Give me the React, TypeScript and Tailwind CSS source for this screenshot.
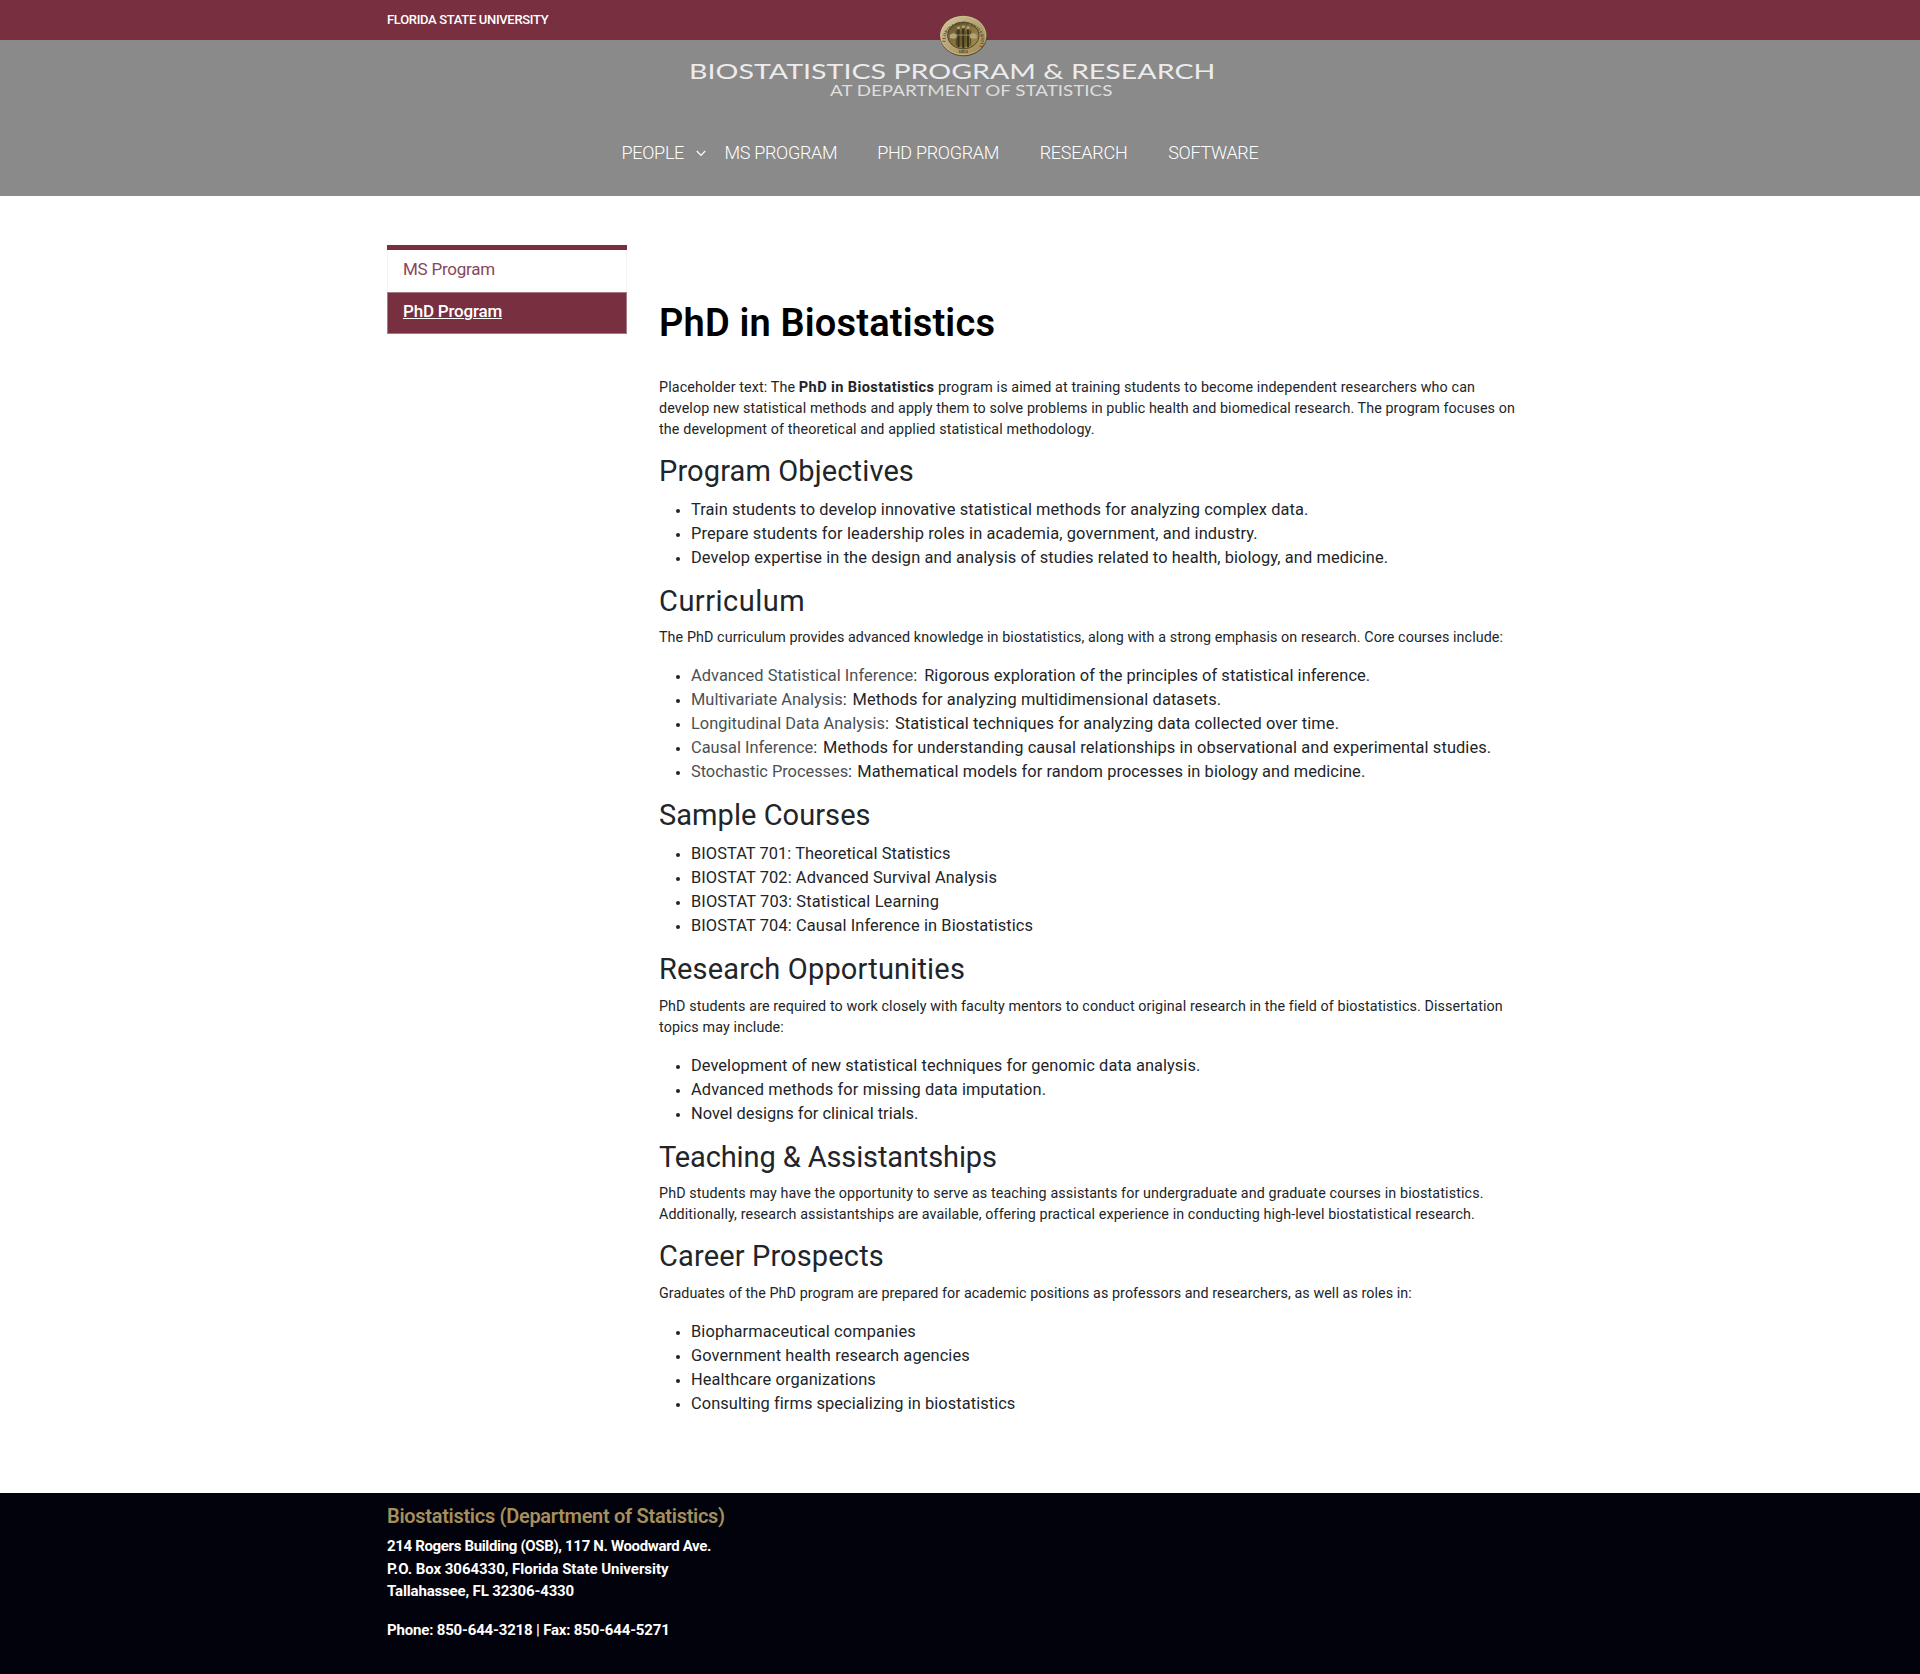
import type { ReactNode } from "react";

type Line = [text: string, tracking: string];
type Course = [name: string, nameStyle: string, text: string, tracking: string];

function Heading({ children, tracking }: { children: ReactNode; tracking: string }) {
  return (
    <h2 className={`mb-2 h-[33.6px] whitespace-nowrap text-[29px] leading-[30px] ${tracking}`}>
      {children}
    </h2>
  );
}

function Paragraph({ lines }: { lines: Line[] }) {
  return (
    <p className="mb-4 text-[14.3px] leading-[21px]">
      {lines.map(([text, tracking]) => (
        <span key={text} className={`block whitespace-nowrap ${tracking}`}>
          {text}
        </span>
      ))}
    </p>
  );
}

function Item({ children }: { children: ReactNode }) {
  return (
    <li className="flex h-6 items-center whitespace-pre text-[16.4px] leading-6">
      <span className="mr-[11px] ml-[17px] mt-0.5 size-1 shrink-0 rounded-full bg-[#212529]" />
      {children}
    </li>
  );
}

function List({ items }: { items: Line[] }) {
  return (
    <ul className="mb-4">
      {items.map(([text, tracking]) => (
        <Item key={text}>
          <span className={tracking}>{text}</span>
        </Item>
      ))}
    </ul>
  );
}

const curriculum: Course[] = [
  ["Advanced Statistical Inference", "w-[233.2px] tracking-[0.04px]", "Rigorous exploration of the principles of statistical inference.", "tracking-[0.066px]"],
  ["Multivariate Analysis", "w-[161.5px] tracking-[0.02px]", "Methods for analyzing multidimensional datasets.", "tracking-[0.1px]"],
  ["Longitudinal Data Analysis", "w-[204px] tracking-[0.02px]", "Statistical techniques for analyzing data collected over time.", "tracking-[0.1px]"],
  ["Causal Inference", "w-[132px] tracking-[0px]", "Methods for understanding causal relationships in observational and experimental studies.", "tracking-[0.098px]"],
  ["Stochastic Processes", "w-[166.3px] tracking-[-0.03px]", "Mathematical models for random processes in biology and medicine.", "tracking-[0.075px]"],
];

function Seal() {
  return (
    <svg
      className="absolute left-[939px] top-[14px] overflow-visible"
      width="49"
      height="43"
      viewBox="0 0 49 43"
      aria-label="University seal"
    >
      <defs>
        <linearGradient id="rim" x1="0" y1="0" x2="1" y2="1">
          <stop offset="0" stopColor="#d3c79d" />
          <stop offset="0.45" stopColor="#b9a67a" />
          <stop offset="0.8" stopColor="#a8925a" />
          <stop offset="1" stopColor="#6f5d33" />
        </linearGradient>
        <linearGradient id="disc" x1="0" y1="0" x2="1" y2="1">
          <stop offset="0" stopColor="#64562f" />
          <stop offset="1" stopColor="#a89150" />
        </linearGradient>
        <path id="arc" d="M8 32 A18 15 0 1 1 40.6 32" />
      </defs>
      <ellipse cx="24.5" cy="22" rx="23.6" ry="20.2" fill="#463a1f" opacity="0.75" />
      <ellipse cx="24.3" cy="21.5" rx="23.2" ry="19.8" fill="url(#rim)" />
      <ellipse cx="24.3" cy="21.5" rx="22.4" ry="19" fill="none" stroke="#d6c99a" strokeWidth="0.5" />
      <ellipse cx="24.3" cy="21.5" rx="15.8" ry="13.4" fill="url(#disc)" stroke="#4d4022" strokeWidth="0.9" />
      <text fontSize="4.4" fill="#51452a" fontFamily="Liberation Serif" fontWeight="700">
        <textPath href="#arc" startOffset="4" textLength="62" lengthAdjust="spacing">
          FLORIDA STATE UNIVERSITY
        </textPath>
      </text>
      <text x="24.3" y="39.3" textAnchor="middle" fontSize="4.8" fill="#3f3419" fontFamily="Liberation Serif" fontWeight="700">
        1851
      </text>
      <g fill="none" stroke="#3a3118" strokeLinecap="round">
        <path d="M19.500 15v17M24.300 14v19M29.100 15v17" strokeWidth="2.400" />
        <path d="M17.300 17v14M31.600 17v14M22 17v15M26.800 17v15" strokeWidth="0.700" />
      </g>
      <g fill="#b3a575">
        <path d="M10.800 21.500c1.500-3 5-3 7.200-.5l-.5 3c-2 1.200-5 .8-6.700 0z" />
        <path d="M37.800 21.500c-1.500-3-5-3-7.200-.5l.5 3c2 1.200 5 .8 6.700 0z" />
        <circle cx="19.500" cy="13.800" r="1.600" />
        <circle cx="24.300" cy="12.800" r="1.600" />
        <circle cx="29.100" cy="13.800" r="1.600" />
        <path d="M18 20.500h12.600v1.200H18z" opacity="0.600" />
      </g>
    </svg>
  );
}

export default function App() {
  return (
    <div className="flex h-[1674px] flex-col bg-white font-['Roboto',sans-serif] text-[#212529]">
      <header className="relative">
        <div className="h-10 bg-[#782f40] pl-[387px] text-[13px] font-medium leading-[39px] tracking-[-0.32px] text-white">
          FLORIDA STATE UNIVERSITY
        </div>
        <Seal />
        <div className="h-[156px] bg-[#8a8a8a] pt-[17.5px] font-['Lato',sans-serif] text-[#ececec]">
          <div className="ml-[689px] h-[26.5px] w-max origin-left scale-x-[1.3] whitespace-nowrap text-[22px] leading-[26px]">
            BIOSTATISTICS PROGRAM &amp; RESEARCH
          </div>
          <div className="ml-[830px] h-[14px] w-max origin-left scale-x-[1.212] whitespace-nowrap text-[15.5px] leading-[13px] text-[#dedede]">
            AT DEPARTMENT OF STATISTICS
          </div>
          <nav className="ml-[621.5px] mt-[43px] flex whitespace-nowrap font-['Roboto',sans-serif] text-[18px] font-light leading-6 text-white">
            <a className="flex w-[103px] items-center tracking-[-0.3px]">
              PEOPLE
              <svg className="ml-[11.5px]" width="10" height="7" viewBox="0 0 10 7" fill="none" stroke="white" strokeWidth="1.2">
                <path d="M0.800 1 5 5.300 9.200 1" />
              </svg>
            </a>
            <a className="w-[152.700px] tracking-[-0.32px]">MS PROGRAM</a>
            <a className="w-[162.500px] tracking-[-0.32px]">PHD PROGRAM</a>
            <a className="w-[128.500px] tracking-[-0.25px]">RESEARCH</a>
            <a className="tracking-[-0.32px]">SOFTWARE</a>
          </nav>
        </div>
      </header>

      <main className="flex flex-1 gap-8 pl-[387px]">
        <aside className="mt-[49px] h-[89px] w-60 shrink-0 border-t-[5px] border-[#782f40] text-[17px]">
          <div className="h-[42px] border-x border-[#f3f3f3] pl-[15px] leading-[39px] tracking-[-0.24px] text-[#86475a]">
            MS Program
          </div>
          <div className="h-[42px] border border-[#a67a86] bg-[#782f40] pl-[15px] leading-[37px] tracking-[-0.203px] text-white">
            <span className="font-medium underline decoration-1 underline-offset-1">PhD Program</span>
          </div>
        </aside>

        <article className="w-[860px]">
          <h1 className="mt-[100px] h-[81.2px] whitespace-nowrap text-[38px] font-semibold leading-[54px] tracking-[0.17px] text-black">
            PhD in Biostatistics
          </h1>

          <p className="mb-4 whitespace-pre text-[14.3px] leading-[21px]">
            <span className="tracking-[0.12px]">Placeholder text: The </span>
            <b className="text-[14.6px] font-bold leading-none tracking-[0.37px]">PhD in Biostatistics</b>
            <span className="tracking-[0.133px]"> program is aimed at training students to become independent researchers who can</span>
            <span className="block tracking-[0.09px]">
              develop new statistical methods and apply them to solve problems in public health and biomedical research. The program focuses on
            </span>
            <span className="block tracking-[0.132px]">the development of theoretical and applied statistical methodology.</span>
          </p>

          <Heading tracking="tracking-[0.12px]">Program Objectives</Heading>
          <List
            items={[
              ["Train students to develop innovative statistical methods for analyzing complex data.", "tracking-[0.08px]"],
              ["Prepare students for leadership roles in academia, government, and industry.", "tracking-[0.135px]"],
              ["Develop expertise in the design and analysis of studies related to health, biology, and medicine.", "tracking-[0.087px]"],
            ]}
          />

          <Heading tracking="tracking-[0.5px]">Curriculum</Heading>
          <Paragraph
            lines={[
              ["The PhD curriculum provides advanced knowledge in biostatistics, along with a strong emphasis on research. Core courses include:", "tracking-[0.091px]"],
            ]}
          />
          <ul className="mb-4">
            {curriculum.map(([name, nameStyle, text, tracking]) => (
              <Item key={name}>
                <span className={nameStyle}>
                  <span className="text-[#4c5054]">{name}</span>:
                </span>
                <span className={tracking}>{text}</span>
              </Item>
            ))}
          </ul>

          <Heading tracking="tracking-[0.05px]">Sample Courses</Heading>
          <List
            items={[
              ["BIOSTAT 701: Theoretical Statistics", "tracking-[0.06px]"],
              ["BIOSTAT 702: Advanced Survival Analysis", "tracking-[0.09px]"],
              ["BIOSTAT 703: Statistical Learning", "tracking-[0.13px]"],
              ["BIOSTAT 704: Causal Inference in Biostatistics", "tracking-[0.1px]"],
            ]}
          />

          <Heading tracking="tracking-[0.17px]">Research Opportunities</Heading>
          <Paragraph
            lines={[
              ["PhD students are required to work closely with faculty mentors to conduct original research in the field of biostatistics. Dissertation", "tracking-[0.104px]"],
              ["topics may include:", "tracking-[0.13px]"],
            ]}
          />
          <List
            items={[
              ["Development of new statistical techniques for genomic data analysis.", "tracking-[0.06px]"],
              ["Advanced methods for missing data imputation.", "tracking-[0.1px]"],
              ["Novel designs for clinical trials.", "tracking-[0.01px]"],
            ]}
          />

          <Heading tracking="tracking-[-0.12px]">Teaching &amp; Assistantships</Heading>
          <Paragraph
            lines={[
              ["PhD students may have the opportunity to serve as teaching assistants for undergraduate and graduate courses in biostatistics.", "tracking-[0.121px]"],
              ["Additionally, research assistantships are available, offering practical experience in conducting high-level biostatistical research.", "tracking-[0.1px]"],
            ]}
          />

          <Heading tracking="tracking-[0.14px]">Career Prospects</Heading>
          <Paragraph
            lines={[
              ["Graduates of the PhD program are prepared for academic positions as professors and researchers, as well as roles in:", "tracking-[0.07px]"],
            ]}
          />
          <List
            items={[
              ["Biopharmaceutical companies", "tracking-[0.13px]"],
              ["Government health research agencies", "tracking-[0.11px]"],
              ["Healthcare organizations", "tracking-[0.1px]"],
              ["Consulting firms specializing in biostatistics", "tracking-[0.07px]"],
            ]}
          />
        </article>
      </main>

      <footer className="h-[181px] whitespace-nowrap bg-[#02020c] pl-[387px] pt-[11px] text-[15px] font-bold leading-[22.500px] text-white">
        <h3 className="mb-[6px] text-[20px] font-semibold leading-[25px] tracking-[-0.3px] text-[#a58f5c]">
          Biostatistics (Department of Statistics)
        </h3>
        <address className="not-italic">
          <div className="tracking-[-0.342px]">214 Rogers Building (OSB), 117 N. Woodward Ave.</div>
          <div className="tracking-[-0.035px]">P.O. Box 3064330, Florida State University</div>
          <div className="tracking-[-0.157px]">Tallahassee, FL 32306-4330</div>
          <div className="mt-4 tracking-[-0.18px]">Phone: 850-644-3218 | Fax: 850-644-5271</div>
        </address>
      </footer>
    </div>
  );
}
